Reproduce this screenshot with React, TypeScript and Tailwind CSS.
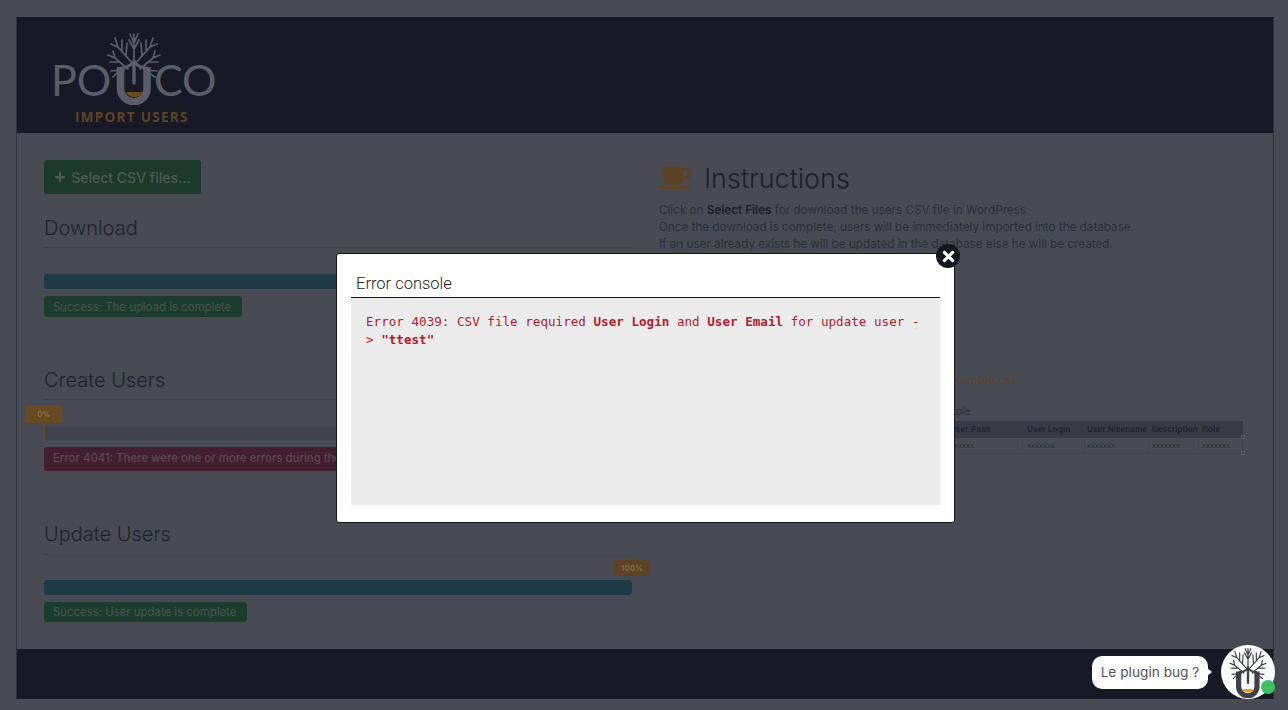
import { FaCoffee, FaPlus, FaTimes } from 'react-icons/fa'

// tree + U mark, used in the header logo and the chat avatar
function LogoMark({ tree, cup, className }: { tree: string; cup: string; className: string }) {
  return (
    <svg viewBox="0 0 54 72" className={className} fill="none" stroke={tree}>
      <g strokeWidth="1.7" strokeLinecap="round">
        <path d="M27 36V1M27 10L23 1M27 10L31 1M27 16L22 7M27 16L32 7" />
        <path d="M27 32L11 14L8 5M15 19L15 7M11 14L4 11M19 23L20 10" />
        <path d="M27 32L43 14L46 5M39 19L39 7M43 14L50 11M35 23L34 10" />
        <path d="M21 36L8 25L1 22M13 29L3 29M8 25L6 18" />
        <path d="M33 36L46 25L53 22M41 29L51 29M46 25L48 18" />
        <path d="M17 37L4 38M37 37L50 38M42 40L48 44M12 38L6 44" />
      </g>
      <path d="M27 28V50" strokeWidth="3.4" strokeLinecap="round" />
      <path d="M13.5 34V55.5a13.25 13.25 0 0 0 26.5 0V34" strokeWidth="7.500" />
      <path d="M13.5 35C18 35 22 34 27 29C32 34 36 35 40 35" strokeWidth="3" />
      <path d="M19 59H36C35 63 31 64 27.500 64C24 64 20 63 19 59Z" fill={cup} stroke="none" />
    </svg>
  )
}

function Progress({ value, bar }: { value: string; bar: string }) {
  return (
    <div className="relative">
      {value === '0%' ? (
        <>
          <div className="h-[14px] rounded-[3px] bg-[#3f424c]" />
          <div className="absolute left-0 top-[-4px] h-[18px] w-px bg-[#6b4a1e]" />
          <span className="absolute left-[-18px] top-[-21px] flex h-[18px] w-[36px] items-center justify-center rounded-[3px] bg-[#6b4a22] text-[8px] text-[#8c7b60]">
            0%
          </span>
        </>
      ) : (
        <>
          <div className={`h-[15px] rounded-[3px] ${bar}`} />
          <span className="absolute right-[-18px] top-[-20px] flex h-[16px] w-[36px] items-center justify-center rounded-[3px] bg-[#5f4424] text-[8px] font-semibold text-[#7f6c52]">
            {value}
          </span>
        </>
      )}
    </div>
  )
}

const columns = [
  { name: 'User Pass', cell: 'xxxxxx', width: 'w-[93px] pl-5' },
  { name: 'User Login', cell: 'xxxxxxx', width: 'w-[62px] pl-[4px]' },
  { name: 'User Nicename', cell: 'xxxxxxx', width: 'w-[64px] pl-[2px]' },
  { name: 'Description', cell: 'xxxxxxx', width: 'w-[50px] pl-[3px]' },
  { name: 'Role', cell: 'xxxxxxx', width: 'w-[44px] pl-[3px]' },
]

export default function App() {
  return (
    <div className="relative h-[710px] w-full overflow-hidden bg-[#484b54] pb-[11px] pl-4 pr-[14px] pt-[17px] font-['Inter',sans-serif]">
      <div className="flex h-[682px] flex-col border-x border-[#2f323d]">
        <header className="h-[116px] bg-[#171a26] pl-[37px] pt-[16px]">
          <div className="flex h-[72px] w-[170px] items-end font-['Lato',sans-serif] text-[43px] font-normal leading-[52px] text-[#5b5e68]">
            <span className="mb-[-1px] ml-[-3px] w-[66px] shrink-0">PO</span>
            <LogoMark tree="#5b5e68" cup="#6b4a1e" className="ml-[-10px] mr-[-7px] h-[72px] w-[54px] shrink-0" />
            <span className="mb-[-1px]">CO</span>
          </div>
          <p className="ml-[21px] mt-[3px] font-['Open_Sans',sans-serif] text-[13.500px] font-bold leading-[18px] tracking-[1.300px] text-[#5d4424]">
            IMPORT USERS
          </p>
        </header>

        <main className="flex flex-1 gap-[27px] pl-[27px]">
          <section className="w-[588px] pt-[27px]">
            <button className="flex h-[34px] w-[157px] items-center justify-center gap-[5px] rounded-[3px] bg-[#1c3a2b] text-[14px] font-medium text-[#4f5a57]">
              <FaPlus className="text-[12px]" />
              Select CSV files...
            </button>

            <h2 className="mt-[22px] text-[20px] font-light leading-[24px] text-[#1f222e]">Download</h2>
            <hr className="mt-[7px] border-[#3f4250]" />
            <div className="mt-[26px]">
              <Progress value="100%" bar="bg-[#1f3a47]" />
            </div>
            <div className="mt-[7px] flex h-[21px] w-[198px] items-center rounded-[3px] bg-[#1c3d2d] pl-[9px] pt-[2px] text-[11.400px] text-[#475650]">
              Success: The upload is complete
            </div>

            <h2 className="mt-[51px] text-[20px] font-light leading-[24px] text-[#1f222e]">Create Users</h2>
            <hr className="mt-[7px] border-[#3f4250]" />
            <div className="mt-[26px]">
              <Progress value="0%" bar="" />
            </div>
            <div className="mt-[7px] flex h-[24px] items-center whitespace-nowrap rounded-[3px] bg-[#431f2e] pl-[9px] text-[11.400px] font-medium text-[#5b4a52]">
              Error 4041: There were one or more errors during the import
            </div>

            <h2 className="mt-[51px] text-[20px] font-light leading-[24px] text-[#1f222e]">Update Users</h2>
            <hr className="mt-[8px] border-[#3f4250]" />
            <div className="mt-[25px]">
              <Progress value="100%" bar="bg-[#1f3a47]" />
            </div>
            <div className="mt-[7px] flex h-[20px] w-[203px] items-center rounded-[3px] bg-[#1c3d2d] pl-[9px] pt-[2px] text-[11.400px] text-[#475650]">
              Success: User update is complete
            </div>
          </section>

          <section className="flex-1 pt-[27px]">
            <div className="flex h-[36px] items-center gap-[13px]">
              <FaCoffee className="text-[32px] text-[#5d4222]" />
              <h1 className="pt-px text-[27px] font-light leading-[36px] text-[#1c1f2b]">Instructions</h1>
            </div>
            <div className="mt-[6px] text-[11.700px] leading-[17px] text-[#2b2e39]">
              <p>
                Click on <b className="font-semibold text-[#1b1e29]">Select Files</b> for download the users CSV file in WordPress.
              </p>
              <p>Once the download is complete, users will be immediately imported into the database.</p>
              <p>If an user already exists he will be updated in the database else he will be created.</p>
            </div>
            <p className="ml-[288px] mt-[119px] text-[12px] leading-[16px] text-[#5d4424]">example.csv</p>
            <p className="ml-[271px] mt-[16px] text-[10px] leading-[14px] text-[#2b2e39]">Example</p>
            <div className="relative ml-[271px] mt-[3px] w-[313px] font-['Liberation_Sans',sans-serif] text-[8px] text-[#2b2e39]">
              <div className="flex h-[17px] items-center bg-[#383b45] text-[8.300px] font-bold text-[#22252e]">
                {columns.map((c) => (
                  <span key={c.name} className={`${c.width} whitespace-nowrap`}>
                    {c.name}
                  </span>
                ))}
              </div>
              <div className="flex h-[16px] items-center border-b border-[#42454f]">
                {columns.map((c) => (
                  <span key={c.name} className={`${c.width} flex h-full items-center border-r border-[#42454f]`}>
                    {c.cell}
                  </span>
                ))}
              </div>
              {/* resize handles left in the example image */}
              <span className="absolute right-[-2px] top-[14px] h-[4px] w-[4px] border border-[#5a5d66]" />
              <span className="absolute right-[-2px] top-[30px] h-[4px] w-[4px] border border-[#5a5d66]" />
            </div>
          </section>
        </main>

        <footer className="h-[50px] bg-[#171a26]" />
      </div>

      {/* error modal */}
      <div className="absolute left-[336px] top-[253px] h-[270px] w-[619px] rounded-[3px] border border-[#14161f] bg-white px-[14px] pt-[19px]">
        <h3 className="h-[24px] pl-[5px] font-['Roboto',sans-serif] text-[16.500px] font-light leading-[22px] text-[#212529]">
          Error console
        </h3>
        <div className="h-[208px] border-t border-[#14161f] bg-[#ebebeb] px-[15px] pb-[14px] pt-[15px] font-['DejaVu_Sans_Mono',monospace] text-[12.600px] leading-[18px] text-[#b81c2e]">
          <p>
            Error 4039: CSV file required <b>User Login</b> and <b>User Email</b> for update user -
          </p>
          <p>
            &gt; <b>"ttest"</b>
          </p>
        </div>
        <button className="absolute right-[-6px] top-[-10px] flex h-[24px] w-[24px] items-center justify-center rounded-full bg-[#14161f] text-[17px] text-white">
          <FaTimes />
        </button>
      </div>

      {/* chat widget */}
      <div className="absolute bottom-[21px] right-[80px] flex h-[33px] w-[116px] items-center justify-center rounded-[10px] bg-white text-[13.700px] text-[#555555]">
        Le plugin bug ?
        <span className="absolute right-[-4px] top-[12px] h-0 w-0 border-y-[4px] border-l-[5px] border-y-transparent border-l-white" />
      </div>
      <div className="absolute bottom-[11px] right-[13px] flex h-[54px] w-[54px] items-center justify-center rounded-full bg-white">
        <LogoMark tree="#3d4049" cup="#ef9a1a" className="mt-[1px] h-[50px] w-[38px]" />
        <span className="absolute bottom-[5px] right-0 h-[14px] w-[14px] rounded-full bg-[#3cc15f]" />
      </div>
    </div>
  )
}
